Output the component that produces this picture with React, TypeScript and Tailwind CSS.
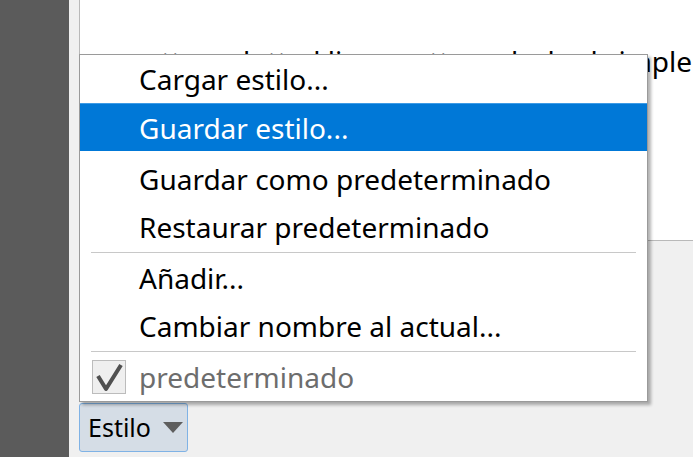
import React from "react";

const font = { fontFamily: "'Noto Sans', 'Open Sans', sans-serif" };

function MenuItem({ label, active }: { label: string; active?: boolean }) {
  return (
    <div
      className={`flex h-[48px] items-center pl-[59px] text-[28px] leading-none ${
        active
          ? "bg-[#0078d7] text-white border-t border-[#3d9be6]"
          : "text-black"
      }`}
    >
      {label}
    </div>
  );
}

function Separator() {
  return <div className="mx-[11px] my-px h-px bg-[#c8c8c8]" />;
}

export default function App() {
  return (
    <div
      className="relative flex h-[457px] w-[698px] overflow-hidden bg-white"
      style={font}
    >
      <div className="w-[69px] shrink-0 bg-[#5b5b5b]" />
      <div className="flex min-w-0 flex-1 flex-col bg-[#f0f0f0] pl-[10px]">
        <div className="h-[241px] overflow-hidden border-b border-l border-[#b9b9b9] bg-white">
          <p className="mt-[40px] whitespace-nowrap pl-[48px] text-[28px] text-black">
            pattern dotted lines pattern dashed simple
          </p>
        </div>
        <div className="mt-auto mb-[5px] flex">
          <button className="flex h-[49px] w-[109px] items-center gap-[12px] rounded-[3px] border border-[#7fb2e5] bg-[#d5dde6] pl-[8px] text-[25px] text-black">
            <span>Estilo</span>
            <svg width="20" height="11" viewBox="0 0 20 11">
              <path d="M0 0h20L10 11z" fill="#5e5e5e" />
            </svg>
          </button>
        </div>
      </div>
      <div className="w-[5px] shrink-0 bg-white" />

      <div className="absolute left-[79px] top-[54px] w-[569px] border border-[#9a9a9a] bg-white shadow-[3px_3px_3px_rgba(0,0,0,0.3)]">
        <MenuItem label="Cargar estilo..." />
        <MenuItem label="Guardar estilo..." active />
        <div className="h-[4px]" />
        <MenuItem label="Guardar como predeterminado" />
        <MenuItem label="Restaurar predeterminado" />
        <Separator />
        <MenuItem label="Añadir..." />
        <MenuItem label="Cambiar nombre al actual..." />
        <Separator />
        <div className="flex h-[48px] items-center text-[28px] text-[#6d6d6d]">
          <div className="ml-[12px] mr-[13px] h-[34px] w-[34px] border border-[#bcbcbc] bg-[#efefef]">
            <svg width="32" height="32" viewBox="0 0 32 32">
              <path
                d="M5 15l8 13L28 4"
                fill="none"
                stroke="#505050"
                strokeWidth="4"
                strokeLinejoin="round"
              />
            </svg>
          </div>
          <span>predeterminado</span>
        </div>
      </div>
    </div>
  );
}
